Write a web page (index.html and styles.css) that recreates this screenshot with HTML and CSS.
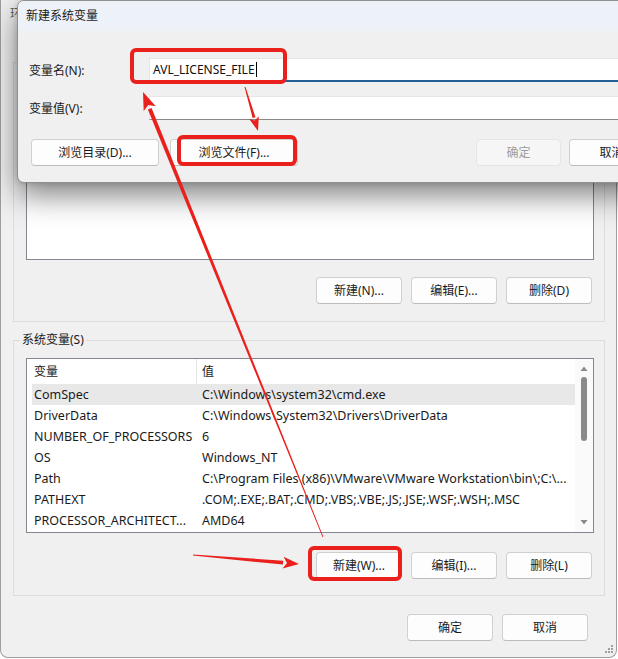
FILE: index.html
```html
<!DOCTYPE html>
<html lang="zh-CN">
<head>
<meta charset="utf-8">
<title>环境变量</title>
<link rel="stylesheet" href="styles.css">
</head>
<body>
<div class="window">
  <div class="win-title">环境变量</div>
  <div class="group group-user">
    <div class="listbox"></div>
    <div class="btn-row">
      <button class="btn">新建(N)...</button>
      <button class="btn">编辑(E)...</button>
      <button class="btn">删除(D)</button>
    </div>
  </div>
  <fieldset class="group group-sys">
    <legend>系统变量(S)</legend>
    <div class="listview">
      <div class="lv-content">
        <div class="lv-header"><span class="c1">变量</span><span class="sep"></span><span class="c2">值</span></div>
        <div class="lv-row sel"><span class="c1">ComSpec</span><span class="c2">C:\Windows\system32\cmd.exe</span></div>
        <div class="lv-row"><span class="c1">DriverData</span><span class="c2">C:\Windows\System32\Drivers\DriverData</span></div>
        <div class="lv-row"><span class="c1">NUMBER_OF_PROCESSORS</span><span class="c2">6</span></div>
        <div class="lv-row"><span class="c1">OS</span><span class="c2">Windows_NT</span></div>
        <div class="lv-row"><span class="c1">Path</span><span class="c2">C:\Program Files (x86)\VMware\VMware Workstation\bin\;C:\...</span></div>
        <div class="lv-row"><span class="c1">PATHEXT</span><span class="c2">.COM;.EXE;.BAT;.CMD;.VBS;.VBE;.JS;.JSE;.WSF;.WSH;.MSC</span></div>
        <div class="lv-row"><span class="c1">PROCESSOR_ARCHITECT...</span><span class="c2">AMD64</span></div>
      </div>
      <div class="scrollbar">
        <svg class="sb-arrow" width="18" height="17" viewBox="0 0 18 17"><path d="M5.5 12 L9 7.5 L12.5 12 Z" fill="#8a8a8a"/></svg>
        <div class="thumb"></div>
        <div class="sb-fill"></div>
        <svg class="sb-arrow" width="18" height="17" viewBox="0 0 18 17"><path d="M5.5 5 L9 9.5 L12.5 5 Z" fill="#8a8a8a"/></svg>
      </div>
    </div>
    <div class="btn-row">
      <button class="btn">新建(W)...</button>
      <button class="btn">编辑(I)...</button>
      <button class="btn">删除(L)</button>
    </div>
  </fieldset>
  <div class="footer">
    <button class="btn">确定</button>
    <button class="btn">取消</button>
  </div>
  <svg class="grip" width="10" height="10" viewBox="0 0 10 10">
    <g fill="#a0a0a0">
      <rect x="7" y="1" width="2" height="2"/>
      <rect x="4" y="4" width="2" height="2"/><rect x="7" y="4" width="2" height="2"/>
      <rect x="1" y="7" width="2" height="2"/><rect x="4" y="7" width="2" height="2"/><rect x="7" y="7" width="2" height="2"/>
    </g>
  </svg>
</div>

<div class="dialog">
  <div class="dlg-title">新建系统变量</div>
  <div class="dlg-body">
    <div class="field">
      <label class="field-label">变量名(N):</label>
      <div class="input focus"><span class="input-text">AVL_LICENSE_FILE</span><span class="caret"></span></div>
    </div>
    <div class="field">
      <label class="field-label">变量值(V):</label>
      <div class="input"></div>
    </div>
    <div class="dlg-buttons">
      <button class="btn wide">浏览目录(D)...</button>
      <button class="btn wide">浏览文件(F)...</button>
      <button class="btn small disabled push">确定</button>
      <button class="btn small">取消</button>
    </div>
  </div>
</div>

<svg class="annot" width="618" height="659" viewBox="0 0 618 659">
  <g fill="none" stroke="#e9201b" stroke-width="4">
    <rect x="132" y="50" width="153" height="32" rx="4"/>
    <rect x="179" y="137" width="116" height="27" rx="4"/>
    <rect x="310" y="548" width="90" height="31" rx="4"/>
  </g>
  <g fill="#e9201b">
    <polygon points="245.5,86.9 255.5,117.2 252.6,118.0 244.5,87.1"/>
    <polygon points="258,131 258.8,116.2 254.9,120.4 249.2,119"/>
    <polygon points="323.4,536.9 151.6,108 147.9,109.5 322.6,537.2"/>
    <polygon points="143,92 155.8,106.3 148.3,105 143.7,111.1"/>
    <polygon points="193,554.5 283.2,560.7 282.9,564.6 193,555.5"/>
    <polygon points="299,564 283.6,556.7 287,563 282.6,568.6"/>
  </g>
</svg>
</body>
</html>
```

FILE: styles.css
```css
* { box-sizing: border-box; }

html, body {
  margin: 0;
  padding: 0;
  width: 618px;
  height: 659px;
  overflow: hidden;
  background: #ffffff;
}

body {
  position: relative;
  font-family: "Noto Sans", "Noto Sans CJK SC", sans-serif;
  font-size: 12px;
  color: #1a1a1a;
}

/* ---------- background window ---------- */
.window {
  position: relative;
  width: 617px;
  height: 658px;
  background: #f0f0f0;
  border: 1px solid #9e9e9e;
  border-top: none;
  border-radius: 0 0 8px 8px;
  display: flex;
  flex-direction: column;
}

.win-title {
  height: 31px;
  padding-left: 9px;
  line-height: 28px;
  color: #5c5c5c;
}

.group {
  margin: 0 11px 0 12px;
  padding: 0 10px 0 12px;
  border: 1px solid #dcdcdc;
  min-width: 0;
}

.group legend {
  padding: 0 2px;
  margin-left: -6px;
  line-height: 16px;
  font-size: 12px;
}

.group-user { margin-top: 31px; padding-top: 15px; padding-bottom: 17px; }
.group-sys { margin-top: 10px; padding-top: 10px; padding-bottom: 16px; }

.listbox {
  height: 182px;
  background: #ffffff;
  border: 1px solid #828790;
}

.btn-row {
  display: flex;
  justify-content: flex-end;
  gap: 9px;
  padding-right: 2px;
}
.group-user .btn-row { margin-top: 17px; }
.group-sys .btn-row { margin-top: 19px; }

.btn {
  width: 86px;
  height: 27px;
  padding: 0;
  background: #fdfdfd;
  border: 1px solid #d0d0d0;
  border-bottom-color: #bcbcbc;
  border-radius: 4px;
  font: inherit;
  font-size: 12px;
  color: #1a1a1a;
  text-align: center;
  line-height: 25px;
}

.footer {
  display: flex;
  justify-content: flex-end;
  gap: 9px;
  margin-top: 18px;
  padding-right: 28px;
}

.grip {
  position: absolute;
  right: 2px;
  bottom: 3px;
}

/* ---------- list view ---------- */
.listview {
  height: 175px;
  display: flex;
  background: #ffffff;
  border: 1px solid #828790;
}

.lv-content {
  flex: 1;
  min-width: 0;
  overflow: hidden;
}

.lv-header,
.lv-row {
  display: flex;
  margin-left: 5px;
  white-space: nowrap;
}

.lv-header {
  height: 25px;
  line-height: 25px;
}

.lv-row {
  height: 21px;
  line-height: 21px;
  font-size: 12.5px;
}

.lv-row.sel { background: #e8e8e8; }

.c1 {
  flex: 0 0 165px;
  padding-left: 2px;
  overflow: hidden;
}
.lv-header .c1 { flex-basis: 164px; }

.sep {
  flex: 0 0 1px;
  background: #e5e5e5;
}

.c2 {
  flex: 1;
  min-width: 0;
  padding-left: 5px;
  overflow: hidden;
}

.scrollbar {
  flex: 0 0 18px;
  display: flex;
  flex-direction: column;
  align-items: center;
  background: #fafafa;
}

.sb-arrow { flex: 0 0 17px; display: block; }

.thumb {
  width: 6px;
  height: 64px;
  margin-top: 1px;
  border-radius: 3px;
  background: #8a8a8a;
}

.sb-fill { flex: 1; }

/* ---------- new variable dialog ---------- */
.dialog {
  position: absolute;
  left: 17px;
  top: 0;
  width: 651px;
  height: 183px;
  background: #f0f0f0;
  border: 1px solid #8f8f8f;
  border-radius: 7px 0 0 7px;
  overflow: hidden;
  box-shadow: 0 12px 30px rgba(0, 0, 0, 0.5), 0 0 6px rgba(0, 0, 0, 0.15);
}

.dlg-title {
  height: 30px;
  padding-left: 8px;
  line-height: 29px;
  background: #edf2f9;
  color: #1a1a1a;
}

.dlg-body {
  padding: 27px 13px 16px 11px;
}

.field {
  display: flex;
  align-items: center;
  height: 24px;
}
.field + .field { margin-top: 14px; }

.field-label {
  flex: 0 0 120px;
  color: #1a1a1a;
}

.input {
  flex: 1;
  height: 24px;
  display: flex;
  align-items: center;
  padding-left: 3px;
  background: #ffffff;
  border: 1px solid #e6e6e6;
  border-bottom: 1px solid #8a8a8a;
  border-right: none;
}

.input.focus {
  border-bottom: 2px solid #215f94;
}

.input-text {
  font-size: 12px;
  color: #111111;
}

.caret {
  width: 1px;
  height: 15px;
  margin-left: 1px;
  background: #000000;
}

.dlg-buttons {
  display: flex;
  margin-top: 19px;
  padding-left: 2px;
}

.btn.wide { width: 128px; }
.btn.wide + .btn.wide { margin-left: 11px; }
.btn.small { width: 85px; }
.btn.small + .btn.small { margin-left: 8px; }
.btn.push { margin-left: auto; }

.btn.disabled {
  background: #f6f6f6;
  border-color: #e5e5e5;
  color: #9d9d9d;
}

/* ---------- annotation overlay ---------- */
.annot {
  position: absolute;
  left: 0;
  top: 0;
  pointer-events: none;
}
```
